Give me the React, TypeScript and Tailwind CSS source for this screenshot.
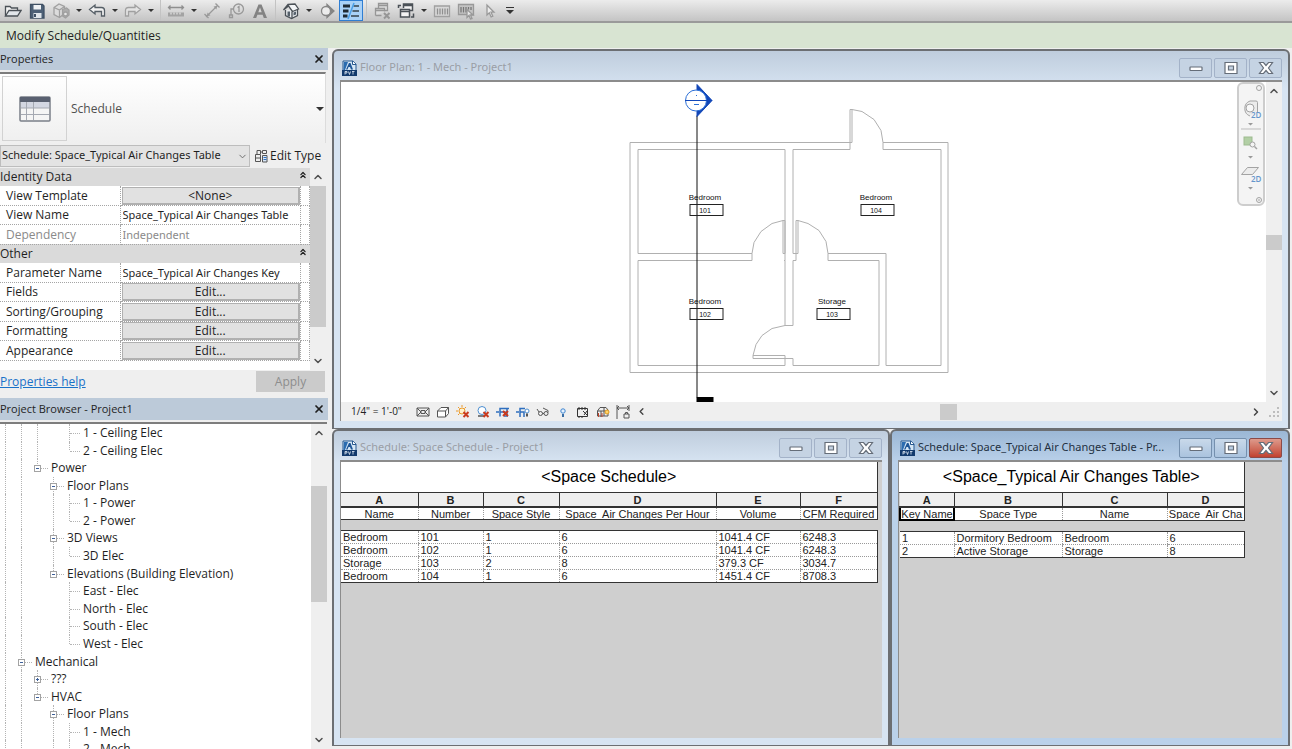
import React from 'react';
import { ChevronDown, ChevronLeft, ChevronRight, ChevronUp, ChevronsUp, X } from 'lucide-react';

/* ---------- quick access toolbar ---------- */

const Caret: React.FC<{ label: string }> = ({ label }) => (
  <button aria-label={label} className="flex h-full w-3 items-center justify-center">
    <span className="border-x-3 border-t-3 border-x-transparent border-t-[#333]" />
  </button>
);

const Separator = () => <span className="mx-[3px] h-full w-px bg-[#c3c3c3]" />;

interface ToolProps {
  label: string;
  color?: string;
  active?: boolean;
  children: React.ReactNode;
}

const Tool: React.FC<ToolProps> = ({ label, color = 'text-[#4b5157]', active, children }) => (
  <button
    aria-label={label}
    aria-pressed={active}
    className={`flex h-full w-6 items-center justify-center ${color} ${
      active ? 'border border-[#2f7ed3] bg-[#a9d1f7]' : ''
    }`}
  >
    <svg width="18" height="18" viewBox="0 0 18 18" fill="none" stroke="currentColor" strokeWidth="1.3">
      {children}
    </svg>
  </button>
);

const faded = 'text-[#a0a0a0]';

const Toolbar = () => (
  <div className="flex h-[23px] shrink-0 items-center border-b-2 border-[#9a9a9a] bg-linear-to-b from-[#ececec] to-[#c4c4c4] pl-px">
    <Tool label="Open">
      <path d="M1.500 14V4.500h4.500l1.500 1.500h6v2.500" fill="#f4f4f4" />
      <path d="M1.500 14l3.500-5.500h12L13.500 14z" fill="#e2e6ea" />
    </Tool>
    <Tool label="Save" color="text-[#3f5064]">
      <path d="M2.500 2.500h12l1.500 1.500v12h-13.500z" fill="#4d6076" />
      <path d="M5.500 3h7.500v4.500H5.500z" fill="#eef1f4" stroke="none" />
      <path d="M5.500 11h8v5h-8z" fill="#dfe5ea" stroke="none" />
      <path d="M7 12v3" strokeWidth="2" />
    </Tool>
    <Tool label="Synchronize" color={faded}>
      <path d="M2 5.500l5-3.500 5.500 2.500v7L7.500 15.500 2 12.500zM2 5.500l5.500 2.500 5-3.500M7.500 8v7.500" fill="#dcdcdc" />
      <path d="M10.500 7.500l4-1.500 2.500 2v5l-3.500 3-3-2z" fill="#adadad" />
      <circle cx="13.500" cy="12" r="2" fill="#e6e6e6" />
    </Tool>
    <Caret label="Synchronize options" />
    <Tool label="Undo" color="text-[#555e66]">
      <path d="M1.500 7.500L7 3v2.500h6.500q3 0 3 3V14h-3V9.500H7V12z" fill="#f2f2f2" />
    </Tool>
    <Caret label="Undo history" />
    <Tool label="Redo" color={faded}>
      <path d="M16.500 7.500L11 3v2.500H4.500q-3 0-3 3V14h3V9.500H11V12z" fill="#e4e4e4" />
    </Tool>
    <Caret label="Redo history" />
    <Separator />
    <Tool label="Measure" color="text-[#8f8f8f]">
      <path d="M1.500 5.500h15M3.500 3.500l-2 2 2 2M14.500 3.500l2 2-2 2" />
      <path d="M1 10.500h16v4H1z" fill="#a3a3a3" stroke="none" />
      <path d="M4 10.500v2M7 10.500v2M10 10.500v2M13 10.500v2" stroke="#ddd" />
    </Tool>
    <Caret label="Measure options" />
    <Tool label="Aligned dimension" color="text-[#999]">
      <path d="M3 15L15 3M1.500 12l4 4M12.500 1.500l4 4" />
      <path d="M4 14l.5-3.500 3 3zM14 4l-3.500.5 3 3z" fill="currentColor" stroke="none" />
    </Tool>
    <Tool label="Tag by category" color="text-[#999]">
      <circle cx="11.500" cy="7" r="5" />
      <path d="M10.500 5.500l1.500-1V10M6.500 7H4v6M2.500 13h3v2.500h-3z" />
    </Tool>
    <Tool label="Text" color="text-[#838383]">
      <path d="M2 16L7.500 2.500h3L16 16h-3.200l-1.200-3.200H6.400L5.200 16zM7.300 10.300h3.400L9 5.500z" fill="currentColor" fillRule="evenodd" stroke="none" />
    </Tool>
    <Separator />
    <Tool label="Default 3D view">
      <path d="M3.500 8v5.500l6 3 6-3V7.500" fill="#e9ecef" />
      <path d="M1.500 8L6 2.500l7-.5L16.500 7l-6 2.500L6.500 4z" fill="#f3f5f7" />
      <path d="M10 9.500v7" />
      <path d="M5.500 9.500h2.500V14.500H5.500zM11.500 10.500l2.500-1v3l-2.500 1z" fill="#55606b" stroke="none" />
    </Tool>
    <Caret label="3D view options" />
    <Tool label="Section" color="text-[#858585]">
      <path d="M9 2.500L16 9l-7 6.500z" fill="currentColor" />
      <circle cx="8" cy="9" r="4.500" fill="#ececec" />
    </Tool>
    <Tool label="Thin lines" active>
      <path d="M1 4h7M1 9h5.500M1 14h4.500" stroke="#1f2a33" strokeWidth="3" />
      <path d="M11.500 4H17M10.500 9H17M9 14h8" stroke="#36414b" />
      <path d="M12 1L6 17" stroke="#4ba0e8" strokeWidth="1.600" />
    </Tool>
    <Separator />
    <Tool label="Close hidden windows" color="text-[#969696]">
      <path d="M5.500 6V1.500h9v7H12M5.500 3.500h9M2.500 13.500v-7h9v3M2.500 8.500h9M2.500 13.500h6" fill="#ddd" />
      <path d="M11 11l5.500 5.500M16.500 11L11 16.500" strokeWidth="2" />
    </Tool>
    <Tool label="Switch windows">
      <path d="M6.500 6V2h9v6.500h-3M6.500 3.500h9" fill="#f3f3f3" strokeWidth="1.500" />
      <path d="M3.500 7.500h9V15h-9zM3.500 9.500h9" fill="#f3f3f3" strokeWidth="1.500" />
      <path d="M1.500 6V3.500H4M16.500 11.500V15H14" strokeWidth="1.500" />
    </Tool>
    <Caret label="Switch windows list" />
    <Tool label="User interface" color="text-[#a0a0a0]">
      <path d="M1.500 4h15v10.500h-15z" fill="#d8d8d8" />
      <path d="M4.500 6.500v6M7 6.500v6M9.500 6.500v6M12 6.500v6M14.500 6.500v6" stroke="#8f8f8f" />
    </Tool>
    <Tool label="Pick interface" color="text-[#999]">
      <path d="M1.500 2.500h15v10h-15z" fill="#c4c4c4" />
      <path d="M4 5v5.500M6.500 5v5.500M9 5v5.500M11.500 5v2.500M14 5v3" stroke="#777" />
      <path d="M10 7.500v8l2-2 1.500 3.500 1.500-.5-1.500-3.500h2.500z" fill="#e8e8e8" />
    </Tool>
    <Tool label="Modify" color="text-[#999]">
      <path d="M6 3v10l2.300-2.200 1.800 4.200 1.700-.8-1.800-4H13z" fill="#ececec" />
    </Tool>
    <button aria-label="Customize toolbar" className="flex w-4 flex-col items-center gap-0.5">
      <span className="h-px w-2 bg-[#333]" />
      <span className="border-x-4 border-t-4 border-x-transparent border-t-[#333]" />
    </button>
  </div>
);

/* ---------- left side ---------- */

const PaneHeader: React.FC<{ title: string }> = ({ title }) => (
  <div className="mb-0.5 flex h-[22px] shrink-0 items-center justify-between bg-[#bccad9] pr-[3px]">
    <h2 className="text-[11px]">{title}</h2>
    <button aria-label={`Close ${title}`}>
      <X size={12} strokeWidth={3.5} />
    </button>
  </div>
);

const VerticalScroll: React.FC<{ before: string; thumb: string; after: string }> = ({ before, thumb, after }) => (
  <div className="flex w-4 shrink-0 flex-col items-center bg-[#efefef] text-[#505050]">
    <button aria-label="Scroll up" className="flex h-[18px] items-center">
      <ChevronUp size={12} strokeWidth={3} />
    </button>
    <span className={before} />
    <span className={`w-full bg-[#cbcbcb] ${thumb}`} />
    <span className={after} />
    <button aria-label="Scroll down" className="flex h-[18px] items-center">
      <ChevronDown size={12} strokeWidth={3} />
    </button>
  </div>
);

interface Property {
  name: string;
  value: string;
  kind: 'button' | 'input' | 'readonly';
}

const groups: { title: string; items: Property[] }[] = [
  {
    title: 'Identity Data',
    items: [
      { name: 'View Template', value: '<None>', kind: 'button' },
      { name: 'View Name', value: 'Space_Typical Air Changes Table', kind: 'input' },
      { name: 'Dependency', value: 'Independent', kind: 'readonly' },
    ],
  },
  {
    title: 'Other',
    items: [
      { name: 'Parameter Name', value: 'Space_Typical Air Changes Key', kind: 'input' },
      { name: 'Fields', value: 'Edit...', kind: 'button' },
      { name: 'Sorting/Grouping', value: 'Edit...', kind: 'button' },
      { name: 'Formatting', value: 'Edit...', kind: 'button' },
      { name: 'Appearance', value: 'Edit...', kind: 'button' },
    ],
  },
];

const PropertyValue: React.FC<{ item: Property }> = ({ item }) => {
  if (item.kind === 'button') {
    return (
      <button
        aria-label={`${item.name} ${item.value}`}
        className="block h-[18px] w-full border border-r-2 border-b-2 border-[#b0b0b0] bg-[#e1e1e1] leading-[15px]"
      >
        {item.value}
      </button>
    );
  }
  return (
    <input
      aria-label={item.name}
      defaultValue={item.value}
      readOnly={item.kind === 'readonly'}
      className="block h-[18px] w-full bg-transparent pl-px font-['Noto_Sans',sans-serif] text-[11px] leading-[18px] outline-none"
    />
  );
};

const PropertyGrid = () => (
  <table className="h-[193px] w-full table-fixed border-collapse">
    <colgroup>
      <col className="w-[120px]" />
      <col />
      <col className="w-[9px]" />
    </colgroup>
    {groups.map((group) => (
      <tbody key={group.title}>
        <tr className="bg-[#dadada]">
          <th colSpan={3} className="p-0 text-left font-normal">
            <span className="flex items-center justify-between pr-0.5 leading-[18px]">
              {group.title}
              <button aria-label={`Collapse ${group.title}`} className="pb-1">
                <ChevronsUp size={10} strokeWidth={3} />
              </button>
            </span>
          </th>
        </tr>
        {group.items.map((item) => (
          <tr key={item.name} className={item.kind === 'readonly' ? 'text-[#8a8a8a]' : ''}>
            <th className="border-r border-b border-dotted border-[#a5a5a5] p-0 pl-1.5 text-left font-normal">
              {item.name}
            </th>
            <td className="border-r border-b border-dotted border-[#a5a5a5] p-0 pl-px">
              <PropertyValue item={item} />
            </td>
            <td className="border-r border-b border-dotted border-[#a5a5a5] p-0" />
          </tr>
        ))}
      </tbody>
    ))}
  </table>
);

const PropertiesPane = () => (
  <section className="flex shrink-0 flex-col">
    <PaneHeader title="Properties" />
    <button
      aria-label="Type selector: Schedule"
      className="flex h-[71px] w-[326px] items-center border-t-2 border-r border-t-[#7d7d7d] border-r-[#dcdcdc] bg-linear-to-b from-white to-[#efefef] pr-px pl-0.5"
    >
      <span className="flex h-[65px] w-[65px] items-center justify-center border border-[#d2d2d2]">
        <svg width="32" height="26" viewBox="0 0 32 26">
          <rect x="1" y="1" width="30" height="24" rx="1" fill="#f5f5f5" stroke="#7a7f88" strokeWidth="1.500" />
          <rect x="1" y="1" width="30" height="5" fill="#596070" />
          <rect x="2" y="6" width="28" height="6" fill="#d3d7e2" />
          <path d="M2 12h28M2 18.500h28M7.500 6v18M14.500 6v18" stroke="#a5a9b2" />
        </svg>
      </span>
      <span className="flex-1 pl-1 text-left text-[#505050]">Schedule</span>
      <span className="border-x-4 border-t-4 border-x-transparent border-t-[#333]" />
    </button>
    <div className="flex h-[25px] items-center">
      <label className="relative w-[250px]">
        <select
          aria-label="Instance"
          className="block h-[22px] w-full appearance-none border border-[#bdbdbd] bg-[#e3e3e3] pl-px font-['Noto_Sans',sans-serif] text-[11px]"
        >
          <option>Schedule: Space_Typical Air Changes Table</option>
        </select>
        <ChevronDown size={11} className="pointer-events-none absolute top-1.5 right-0.5 text-[#666]" />
      </label>
      <button className="ml-1 flex items-center gap-0.5">
        <svg width="14" height="14" viewBox="0 0 14 14" fill="none" stroke="#555">
          <path d="M1.500 5.500h5v7h-5zM1.500 9h5M3 5V1.500h3.500V5M8.500 1.500h4v3h-4zM6.500 3h2" />
          <path d="M8.500 6.500h4.500v6.500H8.500z" fill="#d9e7f7" />
          <path d="M9.500 8.500h3M9.500 10.500h3" stroke="#2d6fbe" />
        </svg>
        Edit Type
      </button>
    </div>
    <div className="flex w-[326px] bg-white">
      <div className="min-w-0 flex-1 pb-[9px]">
        <PropertyGrid />
      </div>
      <VerticalScroll before="" thumb="flex-[143]" after="flex-[25]" />
    </div>
    <div className="flex h-[28px] w-[325px] items-start justify-between pt-px">
      <a href="#help" className="pt-0.5 text-[#1a72c9] underline">
        Properties help
      </a>
      <button disabled className="h-[21px] w-[69px] bg-[#cbcbcb] text-[#8d8d8d]">
        Apply
      </button>
    </div>
  </section>
);

interface TreeRow {
  label: string;
  // one character per level: | full line, L line that stops here, space for none
  guides: string;
  toggle?: '+' | '-';
}

const tree: TreeRow[] = [
  { label: '1 - Ceiling Elec', guides: '||| |' },
  { label: '2 - Ceiling Elec', guides: '||| L' },
  { label: 'Power', guides: '||L', toggle: '-' },
  { label: 'Floor Plans', guides: '|| |', toggle: '-' },
  { label: '1 - Power', guides: '|| ||' },
  { label: '2 - Power', guides: '|| |L' },
  { label: '3D Views', guides: '|| |', toggle: '-' },
  { label: '3D Elec', guides: '|| |L' },
  { label: 'Elevations (Building Elevation)', guides: '|| L', toggle: '-' },
  { label: 'East - Elec', guides: '||  |' },
  { label: 'North - Elec', guides: '||  |' },
  { label: 'South - Elec', guides: '||  |' },
  { label: 'West - Elec', guides: '||  L' },
  { label: 'Mechanical', guides: '||', toggle: '-' },
  { label: '???', guides: '|||', toggle: '+' },
  { label: 'HVAC', guides: '||L', toggle: '-' },
  { label: 'Floor Plans', guides: '|| |', toggle: '-' },
  { label: '1 - Mech', guides: '|| ||' },
  { label: '2 - Mech', guides: '|| ||' },
];

const TreeGuide: React.FC<{ kind: string; last: boolean; toggle?: string }> = ({ kind, last, toggle }) => (
  <span className="relative flex w-4 shrink-0 pl-[5px]">
    {kind !== ' ' && (
      <span className={`border-l border-dotted border-[#b4b4b4] ${kind === 'L' ? 'h-1/2' : 'h-full'}`} />
    )}
    {last && <span className="mt-[9px] h-px flex-1 border-t border-dotted border-[#b4b4b4]" />}
    {last && toggle && (
      <button
        aria-label={toggle === '+' ? 'Expand' : 'Collapse'}
        className="absolute top-1.5 left-0.5 flex h-[7px] w-[7px] items-center justify-center border border-[#a3a3a3] bg-white"
      >
        <span className="absolute h-px w-[3px] bg-[#3c5f9a]" />
        {toggle === '+' && <span className="absolute h-[3px] w-px bg-[#3c5f9a]" />}
      </button>
    )}
  </span>
);

const ProjectBrowser = () => (
  <section className="flex min-h-0 flex-1 flex-col">
    <PaneHeader title="Project Browser - Project1" />
    <div className="flex min-h-0 w-[327px] flex-1 border-t-2 border-[#7d7d7d] bg-white">
      <div className="min-w-0 flex-1 overflow-hidden">
        <ul className="grid h-[334px] auto-rows-fr">
          {tree.map((row, i) => (
            <li key={i} className="flex min-h-0">
              {row.guides.split('').map((kind, level) => (
                <TreeGuide key={level} kind={kind} last={level === row.guides.length - 1} toggle={row.toggle} />
              ))}
              <span className="pl-[3px] leading-[18px] whitespace-nowrap">{row.label}</span>
            </li>
          ))}
        </ul>
      </div>
      <VerticalScroll before="flex-[44]" thumb="flex-[117]" after="flex-[129]" />
    </div>
  </section>
);

/* ---------- document windows ---------- */

const RevitIcon = () => (
  <svg width="15" height="16" viewBox="0 0 15 16" className="shrink-0">
    <path d="M1 1h10l3 3v7H1z" fill="#d5e6f5" stroke="#27588f" />
    <path d="M2 2h4L3 10H1.500z" fill="#2b6cb0" />
    <path d="M10.500 1v3.500H14" fill="#fff" stroke="#27588f" />
    <path d="M4 9.500L7 3h1.500L11 9.500H9L8 7H6.500L5.500 9.500z" fill="#1d5596" />
    <rect x="0" y="10" width="15" height="6" fill="#123a6d" />
    <path d="M3 14.500v-3h2v1.500H3M6.500 11.500l1 3 1-3M10 11.500h2.500M11 11.500v3" stroke="#e4edf7" strokeWidth=".8" fill="none" />
  </svg>
);

interface WindowButtonProps {
  label: string;
  tone: string;
  children: React.ReactNode;
}

const WindowButton: React.FC<WindowButtonProps> = ({ label, tone, children }) => (
  <button aria-label={label} className={`flex h-5 w-[33px] items-center justify-center rounded-xs border ${tone}`}>
    <svg width="18" height="14" viewBox="0 0 18 14" fill="#fff" stroke="#656d78" strokeWidth="1.200">
      {children}
    </svg>
  </button>
);

interface DocWindowProps {
  title: string;
  active?: boolean;
  children: React.ReactNode;
}

const DocWindow: React.FC<DocWindowProps> = ({ title, active, children }) => {
  const tone = active
    ? 'border-[#7590ae] bg-linear-to-b from-[#c9d9ea] to-[#aac3de]'
    : 'border-[#a3b2c8] bg-[#c5d3e3]';
  return (
    <section
      className={`flex min-h-0 min-w-0 flex-col rounded-t-md border-2 border-b border-[#6c6f73] px-1.5 pb-[7px] ${
        active
          ? 'bg-linear-to-b from-[#9bb7d5] from-0% via-[#bad1ea] via-10% to-[#bad1ea]'
          : 'bg-linear-to-b from-[#bfcddd] from-0% via-[#d7e4f2] via-10% to-[#d7e4f2]'
      }`}
    >
      <div
        className={`flex h-[29px] shrink-0 items-center pt-1 pl-0.5 ${active ? 'text-[#23303f]' : 'text-[#9a9ea5]'}`}
      >
        <RevitIcon />
        <h2 className="min-w-0 flex-1 truncate pl-[3px] font-['Noto_Sans',sans-serif] text-[11px]">{title}</h2>
        <div className="flex gap-0.5">
          <WindowButton label="Minimize" tone={tone}>
            <rect x="3" y="6" width="12" height="3.500" rx=".5" />
          </WindowButton>
          <WindowButton label="Maximize" tone={tone}>
            <path d="M3 1.500h12v11H3zM6.500 5v4h5V5z" fillRule="evenodd" />
          </WindowButton>
          <WindowButton
            label="Close"
            tone={active ? 'border-[#8b4a48] bg-linear-to-b from-[#dd9a8c] to-[#c0402f]' : tone}
          >
            <path d="M2.500 1.500h4L9 4.500l2.500-3h4L11.500 7l4 5.500h-4L9 9.500l-2.500 3h-4l4-5.500z" />
          </WindowButton>
        </div>
      </div>
      <div className="flex min-h-0 flex-1 flex-col border-t-2 border-l border-[#8c8c8c]">{children}</div>
    </section>
  );
};

const rooms = [
  { name: 'Bedroom', number: '101', x: 69, y: 124 },
  { name: 'Bedroom', number: '104', x: 240, y: 124 },
  { name: 'Bedroom', number: '102', x: 69, y: 228 },
  { name: 'Storage', number: '103', x: 196, y: 228 },
];

const FloorPlan = () => (
  <svg viewBox="0 0 924 320" className="h-full w-full" role="img" aria-label="Floor plan of level 1">
    <g transform="translate(279.5 -1.500)" fill="none" stroke="#b0b0b0">
      {/* walls */}
      <path d="M229 62H9V292H327V62H262V69H320V285H265V173H207V180H258V285H172V278H132V275H164V285H17V180H131V173H17V69H164V180" />
      <path d="M231 62H229V69H172V173H177M175 173V180H172V245H164V180M164 180h-1" />
      {/* doors */}
      <path d="M229 62V29H231V62M162 173V140H164V173zM175 173V140H177V173z" />
      <path d="M231 29L241 31 253 39 260 50 262 62M162 140L151 143 140 151 133 162 131 173M177 140L187 143 198 150 205 161 207 173M132 275L135 264 141 255 151 248 164 245" />
      {/* section line */}
      <path d="M76 35V317" stroke="#111" />
      <rect x="76" y="317" width="16" height="4" fill="#000" stroke="#000" />
      <path d="M76 4L91 20 76 36z" fill="#1247b8" stroke="#1247b8" />
      <circle cx="75" cy="20" r="10.500" fill="#fff" stroke="#2c6fd6" />
      <path d="M64 20H91" stroke="#1247b8" />
      <path d="M75 15h1M73 24h5" stroke="#2c6fd6" />
      {rooms.map((room) => (
        <g key={room.number} fontFamily="Liberation Sans, Arial, sans-serif" textAnchor="middle">
          <text x={room.x + 15} y={room.y - 5} fontSize="8" fill="#111" stroke="none">
            {room.name}
          </text>
          <rect x={room.x} y={room.y} width="33" height="11" stroke="#222" />
          <text x={room.x + 15} y={room.y + 8} fontSize="7" fill="#111" stroke="none">
            {room.number}
          </text>
        </g>
      ))}
    </g>
  </svg>
);

const NavigationBar = () => (
  <div className="absolute top-0 right-px flex w-7 flex-col items-center rounded-md border-2 border-[#cdcdcd] bg-[#f4f4f4]">
    <svg width="24" height="120" viewBox="0 0 24 120" fill="none" stroke="#a3a3a3">
      <circle cx="20" cy="4" r="2.500" />
      <path d="M18.500 28v-9.500a1.500 1.500 0 0 0-1.500-1.500h-6a8 8 0 0 0 0 15" fill="#ececec" />
      <circle cx="11" cy="24" r="4" fill="#f8f8f8" />
      <path d="M2 45h20" stroke="#bbb" />
      <rect x="5" y="53" width="8" height="8" fill="#b2cfa5" stroke="#9dbb90" />
      <circle cx="13.500" cy="60.500" r="2.500" fill="#f4f4f4" />
      <path d="M15.500 62.500L18 65" strokeWidth="1.500" />
      <path d="M2.500 90.500h11l6-7h-11z" fill="#ececec" />
      <g fill="#9a9a9a" stroke="none">
        <path d="M9 39h5l-2.500 2.500zM9 72h5l-2.500 2.500zM9 103h5l-2.500 2.500z" />
      </g>
      <g fontFamily="Open Sans, sans-serif" fontSize="8" fontWeight="600" fill="#6596cb" stroke="none">
        <text x="12" y="34">2D</text>
        <text x="12" y="98">2D</text>
      </g>
      <circle cx="20" cy="116" r="2.500" />
      <path d="M19 116h2" />
    </svg>
  </div>
);

const viewControls: { label: string; art: React.ReactNode }[] = [
  { label: 'Detail level', art: <path d="M1 3h12v8H1zM1 3l4 4-4 4M13 3L9 7l4 4M5 5.500h4v3H5z" /> },
  { label: 'Visual style', art: <path d="M1.500 6h8v6h-8zM1.500 6L5 2.500h7.500L9.500 6M12.500 2.500v6L9.500 12" fill="#fff" /> },
  {
    label: 'Sun path',
    art: (
      <>
        <circle cx="6" cy="6" r="3" fill="#fff3cf" stroke="#eb9a2a" />
        <path d="M6 0v2M0 6h2M2 2l1.500 1.500M10 2L8.500 3.500M2 10l1.500-1.500" stroke="#eb9a2a" />
        <path d="M7.500 7l5 5M12.500 7l-5 5" stroke="#c93a1e" strokeWidth="2" />
      </>
    ),
  },
  {
    label: 'Shadows',
    art: (
      <>
        <circle cx="6" cy="5.500" r="4" fill="#fff" stroke="#4d8fd1" />
        <path d="M2 11h6" stroke="#555" strokeWidth="1.500" />
        <path d="M7.500 7l5 5M12.500 7l-5 5" stroke="#c93a1e" strokeWidth="2" />
      </>
    ),
  },
  {
    label: 'Crop view',
    art: (
      <>
        <path d="M0 7h3M4 11.500V3.500h9M4 7h5v5M11 3v9" stroke="#2f6fbf" strokeWidth="1.500" />
        <path d="M7 6l5 5M12 6l-5 5" stroke="#c93a1e" strokeWidth="2" />
      </>
    ),
  },
  {
    label: 'Show crop region',
    art: (
      <>
        <path d="M0 7h3M4 12V3.500h5M4 7h4v5" stroke="#2f6fbf" strokeWidth="1.500" />
        <circle cx="11" cy="6" r="2" fill="#fff" stroke="#4d8fd1" />
        <path d="M11 8.500v3" stroke="#555" strokeWidth="2" />
      </>
    ),
  },
  {
    label: 'Temporary hide',
    art: (
      <>
        <path d="M1 4l2 3M7 3l5 2.500v2" />
        <circle cx="4.500" cy="8.500" r="2" />
        <circle cx="10" cy="8.500" r="2" />
        <path d="M6.500 8.500H8" />
      </>
    ),
  },
  {
    label: 'Reveal hidden elements',
    art: (
      <>
        <circle cx="7" cy="6" r="2.200" fill="#e6f2ff" stroke="#3d85d0" />
        <path d="M7 9v3" stroke="#3a6ea5" strokeWidth="2" />
      </>
    ),
  },
  {
    label: 'Temporary view properties',
    art: <path d="M1.500 3.500h10v8h-10zM3 2v3M6 2v3M9 2v3M7 6l5 5M11 6l-3 4M3 11v2M6 11v2" stroke="#333" />,
  },
  {
    label: 'Analytical model',
    art: (
      <>
        <path d="M1.500 6L4 2.500h6L12 5v6H1.500zM1.500 6h8M5 6v6M8 3v8" stroke="#555" />
        <path d="M2.500 8v4M6 8v4" stroke="#c0432a" />
        <circle cx="11" cy="7" r="2" fill="#ffd56b" stroke="#e09a20" />
      </>
    ),
  },
  {
    label: 'Reveal constraints',
    art: <path d="M1 0v14M13 0v6M1 3h12M3 1L1 3l2 2M11 1l2 2-2 2M8 9h5v4H8zM9.500 9V7.500h2V9" />,
  },
];

const FloorPlanWindow = () => (
  <DocWindow title="Floor Plan: 1 - Mech - Project1">
    <div className="flex min-h-0 flex-1">
      <div className="relative min-w-0 flex-1 bg-white">
        <FloorPlan />
        <NavigationBar />
      </div>
      <VerticalScroll before="flex-[135]" thumb="flex-[16]" after="flex-[134]" />
    </div>
    <div className="flex h-[19px] shrink-0 items-center bg-[#efefef] text-[#444]">
      <span className="w-[72px] pl-2.5 text-[10px] whitespace-nowrap text-[#222]">1/4" = 1'-0"</span>
      {viewControls.map((control) => (
        <button key={control.label} aria-label={control.label} className="flex w-5 justify-center">
          <svg width="14" height="14" viewBox="0 0 14 14" fill="none" stroke="#555">
            {control.art}
          </svg>
        </button>
      ))}
      <button aria-label="Scroll left" className="flex w-4 justify-center">
        <ChevronLeft size={11} strokeWidth={3} />
      </button>
      <span className="flex-[292]" />
      <span className="h-4 w-[17px] bg-[#cbcbcb]" />
      <span className="flex-[292]" />
      <button aria-label="Scroll right" className="flex w-4 justify-center">
        <ChevronRight size={12} strokeWidth={3} />
      </button>
      <svg width="18" height="12" viewBox="0 0 18 12" fill="#bdbdbd">
        <path d="M5 9h2v2H5zM9 9h2v2H9zM13 9h2v2h-2zM9 5h2v2H9zM13 5h2v2h-2zM13 1h2v2h-2z" />
      </svg>
    </div>
  </DocWindow>
);

interface Column {
  letter: string;
  header: string;
  width: string;
}

interface ScheduleProps {
  title: string;
  columns: Column[];
  rows: string[][];
  width: string;
  selected?: number;
}

const Schedule: React.FC<ScheduleProps> = ({ title, columns, rows, width, selected }) => (
  <div className="min-h-0 flex-1 overflow-hidden bg-[#cfcfcf]">
    <table
      className={`${width} table-fixed border-collapse font-['Liberation_Sans',Arial,sans-serif] text-[11px] leading-[12px] text-[#222]`}
    >
      <caption className="h-[31px] border border-t-0 border-l-0 border-[#333] bg-white text-[16px] leading-[30px] text-black">
        {title}
      </caption>
      <colgroup>
        {columns.map((column) => (
          <col key={column.letter} className={column.width} />
        ))}
      </colgroup>
      <thead>
        <tr>
          {columns.map((column) => (
            <th key={column.letter} className="h-[14px] border-r border-b-2 border-[#333] bg-[#efefef] p-0 leading-[12px]">
              {column.letter}
            </th>
          ))}
        </tr>
        <tr className="border-r border-b border-[#333] bg-white">
          {columns.map((column, i) => (
            <th
              key={column.letter}
              className={`h-[12px] p-0 font-normal ${
                i === selected ? 'border-2 border-black' : 'border-l border-l-[#999] [border-left-style:dotted] first:border-l-0'
              }`}
            >
              <span className="block h-[11px] overflow-hidden leading-[12px] whitespace-pre">{column.header}</span>
            </th>
          ))}
        </tr>
      </thead>
      <tbody>
        <tr>
          <td colSpan={columns.length} className="h-[11px] p-0" />
        </tr>
      </tbody>
      <tbody className="border border-l-0 border-[#333] bg-white">
        {rows.map((row, r) => (
          <tr key={r}>
            {row.map((cell, c) => (
              <td
                key={c}
                className="h-[13px] border-b border-l border-dotted border-[#999] p-0 pl-0.5 whitespace-nowrap first:border-l-0"
              >
                {cell}
              </td>
            ))}
          </tr>
        ))}
      </tbody>
    </table>
  </div>
);

const spaceColumns: Column[] = [
  { letter: 'A', header: 'Name', width: 'w-[77px]' },
  { letter: 'B', header: 'Number', width: 'w-[65px]' },
  { letter: 'C', header: 'Space Style', width: 'w-[76px]' },
  { letter: 'D', header: 'Space  Air Changes Per Hour', width: 'w-[157px]' },
  { letter: 'E', header: 'Volume', width: 'w-[84px]' },
  { letter: 'F', header: 'CFM Required', width: 'w-[77px]' },
];

const spaceRows = [
  ['Bedroom', '101', '1', '6', '1041.4 CF', '6248.3'],
  ['Bedroom', '102', '1', '6', '1041.4 CF', '6248.3'],
  ['Storage', '103', '2', '8', '379.3 CF', '3034.7'],
  ['Bedroom', '104', '1', '6', '1451.4 CF', '8708.3'],
];

const keyColumns: Column[] = [
  { letter: 'A', header: 'Key Name', width: 'w-[54px]' },
  { letter: 'B', header: 'Space Type', width: 'w-[108px]' },
  { letter: 'C', header: 'Name', width: 'w-[105px]' },
  { letter: 'D', header: 'Space  Air Cha', width: 'w-[77px]' },
];

const keyRows = [
  ['1', 'Dormitory Bedroom', 'Bedroom', '6'],
  ['2', 'Active Storage', 'Storage', '8'],
];

export default function App() {
  return (
    <div className="flex h-screen flex-col overflow-hidden bg-[#efefef] font-['Open_Sans','Noto_Sans',sans-serif] text-[12px] text-[#1f1f1f]">
      <Toolbar />
      <div className="flex h-[25px] shrink-0 items-center bg-[#d8e4d2] pt-px pl-1.5 text-[#222]">
        Modify Schedule/Quantities
      </div>
      <div className="flex min-h-0 flex-1">
        <aside className="flex w-[328px] shrink-0 flex-col">
          <PropertiesPane />
          <ProjectBrowser />
        </aside>
        <main className="ml-1 grid min-w-0 flex-1 grid-rows-[380fr_317fr] pt-px pr-0.5 pb-[3px]">
          <FloorPlanWindow />
          <div className="grid min-h-0 grid-cols-[558fr_400fr]">
            <DocWindow title="Schedule: Space Schedule - Project1">
              <Schedule title="<Space Schedule>" columns={spaceColumns} rows={spaceRows} width="w-[536px]" />
            </DocWindow>
            <DocWindow title="Schedule: Space_Typical Air Changes Table - Pr..." active>
              <Schedule
                title="<Space_Typical Air Changes Table>"
                columns={keyColumns}
                rows={keyRows}
                width="w-[344px]"
                selected={0}
              />
            </DocWindow>
          </div>
        </main>
      </div>
    </div>
  );
}
